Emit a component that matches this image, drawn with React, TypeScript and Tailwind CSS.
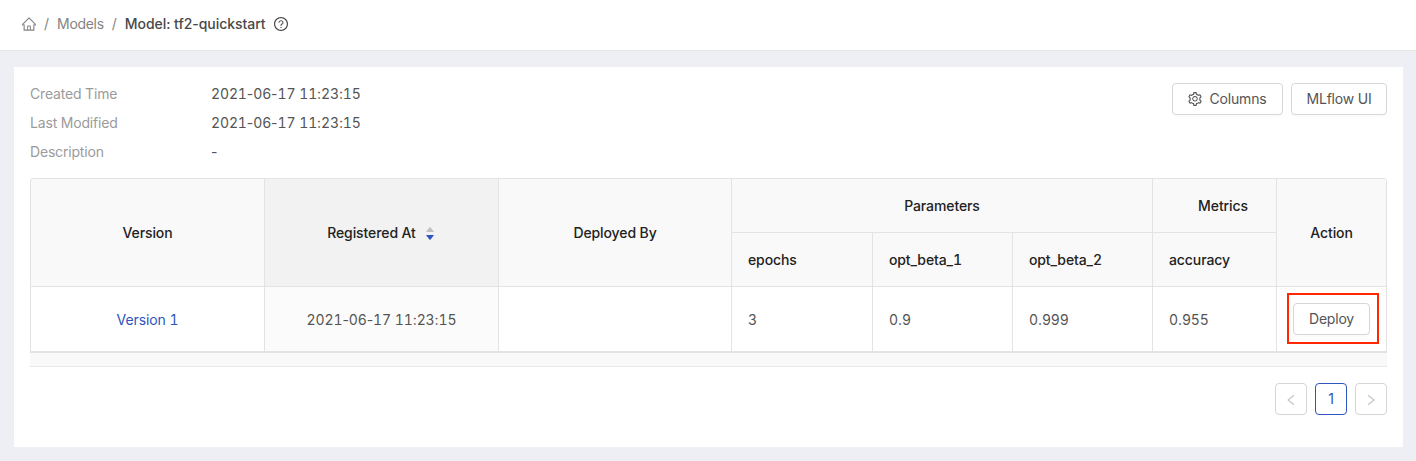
import React from "react";
import {
  AiOutlineHome,
  AiOutlineLeft,
  AiOutlineQuestionCircle,
  AiOutlineRight,
  AiOutlineSetting,
} from "react-icons/ai";

const th = "border-r border-b border-[#e3e3e3] bg-[#f9f9f9] p-0 font-medium text-[#222]";
const td = "border-r border-b-2 border-[#e3e3e3] p-0 pt-0.5";
const button =
  "flex h-8 items-center justify-center rounded border border-[#d6d6d6] bg-white tracking-[-0.2px] shadow-[0_2px_0_rgba(0,0,0,0.016)]";

const details = [
  ["Created Time", "2021-06-17 11:23:15"],
  ["Last Modified", "2021-06-17 11:23:15"],
  ["Description", "-"],
];

// Digits share one width; the separators between them keep their own.
function Figures({ text }: { text: string }) {
  return (
    <span className="tracking-[-0.12px]">
      {text.split(/(\d+)/).map((part, i) =>
        i % 2 ? <span key={i} className="tabular-nums">{part}</span> : part,
      )}
    </span>
  );
}

function Breadcrumb() {
  return (
    <header className="flex h-[51px] items-center border-b border-[#e8e8e8] bg-white pb-0.5 pl-[21px] text-[#848484]">
      <AiOutlineHome className="size-4" />
      <span className="mr-2 ml-[7px]">/</span>
      <a className="tracking-[-0.3px]">Models</a>
      <span className="mr-2 ml-2">/</span>
      <span className="w-[142px] font-medium tracking-[-0.05px] whitespace-nowrap text-[#484848]">Model: tf2-quickstart</span>
      <AiOutlineQuestionCircle className="ml-1.5 size-4 text-[#484848]" />
    </header>
  );
}

function VersionTable() {
  return (
    <div className="border-b border-[#e8e8e8] bg-[#f9f9f9] pb-[13px]">
      <table className="w-[1357px] table-fixed border-separate border-spacing-0 overflow-hidden rounded-t border-t border-l border-[#e3e3e3] bg-white text-center">
        <colgroup>
          <col className="w-[234px]" />
          <col className="w-[234px]" />
          <col className="w-[233px]" />
          <col className="w-[141px]" />
          <col className="w-[140px]" />
          <col className="w-[140px]" />
          <col className="w-[124px]" />
          <col className="w-[110px]" />
        </colgroup>
        <thead className="tracking-[-0.1px]">
          <tr className="h-[54px]">
            <th rowSpan={2} className={th}>Version</th>
            <th rowSpan={2} className="border-r border-b border-[#e3e3e3] bg-[#f2f2f2] p-0 font-medium text-[#222]">
              <div className="flex items-center justify-center gap-2.5 pr-0.5">
                <span>Registered At</span>
                <svg width="8" height="13" viewBox="0 0 8 13" className="mt-px">
                  <path d="M0 5 3.6 0.3H4.4L8 5Z" fill="#bfbfbf" />
                  <path d="M0 8 3.6 12.7H4.4L8 8Z" fill="#2e54bd" />
                </svg>
              </div>
            </th>
            <th rowSpan={2} className={th}>Deployed By</th>
            <th colSpan={3} className={th}>Parameters</th>
            <th className={th}><span className="pl-[17px]">Metrics</span></th>
            <th rowSpan={2} className={th}>Action</th>
          </tr>
          <tr className="h-[54px] text-left">
            <th className={th}><span className="pl-4">epochs</span></th>
            <th className={th}><span className="pl-4"><Figures text="opt_beta_1" /></span></th>
            <th className={th}><span className="pl-4"><Figures text="opt_beta_2" /></span></th>
            <th className={th}><span className="pl-4">accuracy</span></th>
          </tr>
        </thead>
        <tbody>
          <tr className="h-[66px]">
            <td className={td}><a className="text-[#2e54bd]"><Figures text="Version 1" /></a></td>
            <td className="border-r border-b-2 border-[#e3e3e3] bg-[#fbfbfb] p-0 pt-0.5">
              <Figures text="2021-06-17 11:23:15" />
            </td>
            <td className={td} />
            <td className={td}><div className="pl-4 text-left"><Figures text="3" /></div></td>
            <td className={td}><div className="pl-4 text-left"><Figures text="0.9" /></div></td>
            <td className={td}><div className="pl-4 text-left"><Figures text="0.999" /></div></td>
            <td className={td}><div className="pl-4 text-left"><Figures text="0.955" /></div></td>
            <td className="border-r border-b-2 border-[#e3e3e3] p-0 pb-px">
              <div className="ml-2.5 flex h-[51px] w-[92px] items-center border-2 border-[#ff2600] pt-px pl-1">
                <button className={button}><span className="w-[75px]">Deploy</span></button>
              </div>
            </td>
          </tr>
        </tbody>
      </table>
    </div>
  );
}

export default function App() {
  return (
    <div className="h-[461px] overflow-hidden bg-[#eeeff4] font-['Inter',sans-serif] text-sm leading-[22px] text-[#545454]">
      <Breadcrumb />
      <main className="mt-4 mr-[13px] ml-3.5 h-[380px] bg-white px-4 pt-4">
        <div className="flex h-[95px] justify-between">
          <dl className="flex flex-col gap-[7px]">
            {details.map(([label, value]) => (
              <div key={label} className="flex">
                <dt className="w-[181px] tracking-[-0.18px] text-[#9b9b9b]">{label}</dt>
                <dd><Figures text={value} /></dd>
              </div>
            ))}
          </dl>
          <div className="flex gap-2">
            <button className={button}>
              <span className="flex w-[109px] items-center justify-center gap-[7px] pr-0.5">
                <AiOutlineSetting className="size-4" />
                Columns
              </span>
            </button>
            <button className={button}><span className="w-[94px]">MLflow UI</span></button>
          </div>
        </div>
        <VersionTable />
        <nav className="mt-4 flex justify-end gap-2">
          <button className="flex size-8 items-center justify-center rounded border border-[#d6d6d6] text-[#bfbfbf]">
            <AiOutlineLeft className="mt-0.5 size-3.5" />
          </button>
          <button className="size-8 rounded border border-[#2e54bd] text-[#2e54bd]">1</button>
          <button className="flex size-8 items-center justify-center rounded border border-[#d6d6d6] text-[#bfbfbf]">
            <AiOutlineRight className="mt-0.5 size-3.5" />
          </button>
        </nav>
      </main>
    </div>
  );
}
